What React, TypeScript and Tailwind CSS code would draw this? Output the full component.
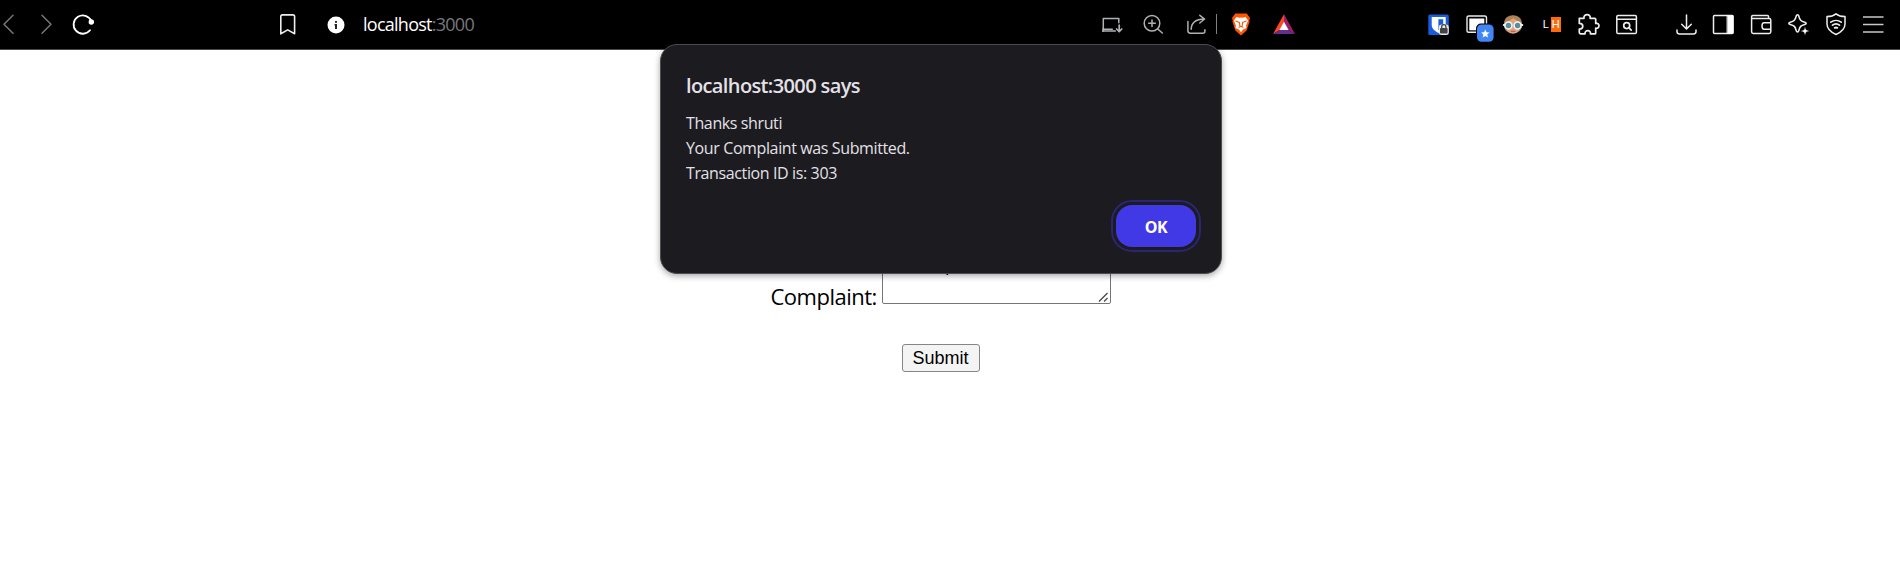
import type { ReactNode } from "react";

type IconProps = { children: ReactNode; className?: string };

function Icon({ children, className = "" }: IconProps) {
  return (
    <svg
      width={24}
      height={24}
      viewBox="0 0 24 24"
      fill="none"
      stroke="currentColor"
      strokeWidth="1.5"
      strokeLinecap="round"
      strokeLinejoin="round"
      className={`block shrink-0 overflow-visible ${className}`}
    >
      {children}
    </svg>
  );
}

function Navigation() {
  return (
    <nav className="flex w-[275px] shrink-0 items-center">
      <Icon className="-ml-[3px] text-[#77777b]">
        <path d="M16 3.3 7 12.3l9 9" />
      </Icon>
      <Icon className="ml-[13px] text-[#77777b]">
        <path d="m8 3.3 9 9-9 9" />
      </Icon>
      <Icon className="ml-[13px] text-white">
        <path d="M20.3 9A9.2 9.2 0 1 0 19 18.3" strokeWidth="1.8" />
        <circle cx="20.3" cy="10" r="2.7" fill="currentColor" stroke="none" />
      </Icon>
    </nav>
  );
}

function AddressBar() {
  return (
    <div className="flex w-[1151px] shrink-0 items-center">
      <Icon>
        <path d="M5.8 21.8V4.6q0-1.7 1.7-1.7h10.4q1.7 0 1.7 1.7v17.2l-6.9-3.9z" strokeWidth="1.6" />
      </Icon>
      <Icon className="ml-[25px] text-white">
        <circle cx="12" cy="13" r="8.5" fill="currentColor" stroke="none" />
        <path d="M11 9h2v1.8h-2zM10.5 12H13v5h-2v-3.5h-.5z" fill="#222" stroke="none" />
      </Icon>
      <p className="ml-[15px] w-[726px] font-['Open_Sans','Noto_Sans',sans-serif] text-[18px] leading-6 tracking-[-0.74px] text-white">
        localhost<span className="text-[#77777b]">:3000</span>
      </p>
      <div className="flex items-center text-[#b0b1b3]">
        <Icon className="ml-[11px]">
          <path d="M18.8 10.8V6.6H3.3v10.6h9" />
          <path d="M2.8 19h12.4M3 17.2v2M19.2 13v6.2M16.6 17l2.6 2.6L21.8 17" strokeWidth="1.7" />
        </Icon>
        <Icon className="ml-[18px]">
          <circle cx="10" cy="11.3" r="7.8" />
          <path d="m15.8 17 4.5 4M10 8v6.6M6.7 11.3h6.6" />
        </Icon>
        <Icon className="ml-[19px]">
          <path d="M2.9 9.5v9.3q0 2.4 2.4 2.4h12.4q2.2 0 2.2-2v-1.4M6.2 17.3c0-6.7 5-10.4 12.8-10.4M14.8 3.3l4.8 3.7-4.8 4" />
        </Icon>
      </div>
      <div className="ml-[7px] h-5 w-px bg-[#808084]" />
      <Icon className="ml-[12px]">
        <path d="M6.3 1.500h11.4l3.3 4.6-.7 2.4.3 1-3 9L12 23.400 6.4 18.500l-3-9 .3-1L3 6.100z" fill="#ff5500" stroke="none" />
        <path d="m7.5 5 2.7.8 1.8-.4 1.8.4 2.7-.8 2.6 3.4-2 5.2.3 2.4-3.3 1.4L12 20.2l-2.1-2.8L6.6 16l.3-2.4-2-5.2z" fill="#fff" stroke="none" />
        <path d="m6.8 9 3.6 1.4M17.2 9l-3.6 1.4M10.4 10.4l.4 3.2M13.6 10.4l-.4 3.2M10 15.3l2-1 2 1" stroke="#ff5500" strokeWidth="1.1" />
      </Icon>
      <Icon className="ml-[19px]">
        <path d="M12 2.3 1 22l7-4.2 4-7z" fill="#ff4724" stroke="none" />
        <path d="m12 2.3 11 19.7-7-4.2-4-7z" fill="#9e1f63" stroke="none" />
        <path d="m1 22 7-4.2h8l7 4.2z" fill="#662d91" stroke="none" />
        <path d="m12 9.8 4.6 8.2H7.4z" fill="#fff" stroke="none" />
      </Icon>
    </div>
  );
}

function Extensions() {
  return (
    <div className="flex shrink-0 items-center gap-[13.6px]">
      <Icon>
        <rect x="2.3" y="2.5" width="20.5" height="20.5" rx="1.6" fill="#175ddc" stroke="none" />
        <path d="M5.7 5h14v8c0 4-4 6.5-7 8-3-1.5-7-4-7-8z" fill="#fff" stroke="none" />
        <path d="M12.4 7.2h4.8v6c0 2-2.3 3.6-4.8 5z" fill="#175ddc" stroke="none" />
        <rect x="12.8" y="12.5" width="10" height="10.5" rx="3" fill="#e8e8e8" stroke="none" />
        <rect x="14" y="16" width="7.6" height="5.6" rx="1" fill="#444" stroke="none" />
        <path d="M15.7 16v-1.2a2.1 2.1 0 0 1 4.2 0V16" stroke="#444" strokeWidth="1.3" />
      </Icon>
      <Icon>
        <rect x="3" y="4" width="19.5" height="16.3" rx="1.8" stroke="#ececec" strokeWidth="1.4" />
        <rect x="5.3" y="6.5" width="15" height="11.8" fill="#fff" stroke="none" />
        <rect x="12" y="11.5" width="18.5" height="19" rx="5" fill="#000" stroke="none" />
        <rect x="13" y="12.5" width="16.6" height="17.2" rx="4.5" fill="#4285f4" stroke="none" />
        <path d="m21.3 17.4 1.2 2.9 3.1.2-2.4 2 .8 3-2.7-1.6-2.7 1.6.8-3-2.4-2 3.1-.2z" fill="#fff" stroke="none" />
      </Icon>
      <Icon>
        <circle cx="12" cy="12.7" r="9" fill="#e1a27e" stroke="none" />
        <path d="M3.300 12C2.900 6 7.300 3.300 12 3.300S21.100 6 20.700 12L19 10.500 12.300 6.200l-7 4.300z" fill="#ad8256" stroke="none" />
        <path d="M3.200 13.500c0 2.600 1.100 4.800 2.600 6V15zM20.800 13.500c0 2.600-1.100 4.800-2.600 6V15z" fill="#99704d" stroke="none" />
        <circle cx="7.400" cy="13.400" r="3.500" fill="#5c8b9b" stroke="#e9f7fa" strokeWidth="1.500" />
        <circle cx="16.600" cy="13.400" r="3.500" fill="#5c8b9b" stroke="#e9f7fa" strokeWidth="1.500" />
        <path d="M2.800 13h1M20.300 13h1" stroke="#e9f7fa" strokeWidth="2" />
        <path d="M10.100 19.300h3.800" stroke="#b35442" strokeWidth="1" />
      </Icon>
      <div className="flex h-6 w-6 items-center justify-end pr-[2px] pt-px font-['Liberation_Sans',sans-serif] text-[11px] leading-[15px] text-white">
        <span className="mr-[2px] text-[11px]">L</span>
        <span className="h-[15px] w-[10px] bg-[#ff6b0a] text-center">H</span>
      </div>
      <Icon>
        <path d="M3 5.6h4.7C7.3 3.4 8.8 2 10.8 2s3.5 1.4 3.1 3.6h4.5q1 0 1 1v4.2c2-.5 3.3.5 3.3 2.3s-1.3 2.8-3.3 2.3v4.8q0 1-1 1h-4.2c.2-2.2-1-3.2-2.7-3.2s-3 1-2.8 3.2H4.3q-1.3 0-1.3-1.3v-3.6c2.3 0 3.5-1.2 3.5-2.8S5.3 10.800 3 10.700z" transform="translate(.3 .7)" strokeWidth="1.7" />
      </Icon>
      <Icon>
        <rect x="2.800" y="3.500" width="19.600" height="18" rx="1.300" />
        <path d="M3 7.200h19.200" />
        <circle cx="12.700" cy="13.600" r="3" strokeWidth="1.700" />
        <path d="m15 15.900 2.200 2.200" strokeWidth="1.700" />
      </Icon>
    </div>
  );
}

function BrowserControls() {
  return (
    <div className="ml-[36px] flex shrink-0 items-center gap-[13.4px]">
      <Icon>
        <path d="M12.5 3v13.8M7.7 12.2l4.8 4.8 4.8-4.8M3 18v1.5q0 2.4 2.4 2.4h14.2q2.4 0 2.4-2.4V18" />
      </Icon>
      <Icon>
        <rect x="2.5" y="3.5" width="19.5" height="18" rx="1" />
        <path d="M16.5 3.5H22v18h-5.500z" fill="#fff" stroke="#fff" strokeWidth="1" />
      </Icon>
      <Icon>
        <path d="M19.600 6V4.800q0-1.300-1.300-1.300H3.800q-1.200 0-1.200 1.300v15q0 1.600 1.600 1.600h16q1.600 0 1.600-1.600V8.200q0-1.700-1.700-1.700H3M21.800 10.800H15q-2 0-2 3.200t2 3.200h6.800" />
      </Icon>
      <Icon>
        <path d="M11.500 2.800c.8 0 1 .3 1.300 1.300 1 4 2 5 6 6.100 1.800.5 1.800 1.700 0 2.200-4 1.100-5 2.200-6 6.200-.5 1.800-2.100 1.800-2.600 0-1-4-2-5.100-6-6.200-1.800-.5-1.800-1.700 0-2.200 4-1.100 5-2.100 6-6.100.3-1 .5-1.300 1.300-1.300z" strokeWidth="1.6" />
        <path d="m19 14.500 1.200 3.300 3.300 1.200-3.300 1.200L19 23.500l-1.200-3.300-3.300-1.200 3.300-1.200z" fill="#fff" stroke="#000" strokeWidth=".5" />
      </Icon>
      <Icon>
        <path d="M12 1.800c2.700 2.200 5.600 2.700 9 2.700V12c0 4.700-3.600 8-9 10.500-5.400-2.500-9-5.800-9-10.500V4.500c3.400 0 6.300-.5 9-2.700z" />
        <path d="M6.800 10.200c3-2.300 7.400-2.300 10.400 0M8.500 13.200c2-1.600 5-1.600 7 0" strokeWidth="1.7" />
        <path d="M10.800 15.800q1.200-.8 2.400 0" strokeWidth="2" />
      </Icon>
      <Icon className="text-[#c8c8ca]">
        <path d="M2 5h20.500M2 12.500h20.500M2 20h20.500" strokeWidth="1.7" strokeLinecap="butt" />
      </Icon>
    </div>
  );
}

function Toolbar() {
  return (
    <header className="flex h-[50px] items-center overflow-hidden border-b border-[#4a494d] bg-black pb-px text-[#eeeef0]">
      <Navigation />
      <AddressBar />
      <Extensions />
      <BrowserControls />
    </header>
  );
}

function ComplaintForm() {
  return (
    <form
      className="flex flex-col items-center pr-[19px] pt-[208px] text-black"
      onSubmit={(event) => event.preventDefault()}
    >
      <label className="relative flex items-end">
        <span className="mr-[6px] -mb-[9px] w-[105px] whitespace-nowrap font-['Open_Sans','Noto_Sans',sans-serif] text-[22px] leading-[34px] tracking-[-0.5px]">
          Complaint:
        </span>
        <textarea
          defaultValue="no computers"
          className="block h-[46px] w-[229px] resize-none overflow-hidden rounded-[2px] border border-[#767676] bg-white px-[2.5px] py-0 font-['Liberation_Mono',monospace] text-[16.67px] leading-[18px]"
        />
        <svg
          width={12}
          height={12}
          viewBox="0 0 12 12"
          className="absolute bottom-px right-px stroke-[#4d4d4d]"
          strokeWidth="1.4"
        >
          <path d="m1 10.500 8.500-8.500M6 10.500 9.500 7" />
        </svg>
      </label>
      <button
        type="submit"
        className="mt-10 h-7 w-[78px] rounded-[3px] border border-[#858585] bg-[#f4f4f4] font-['Liberation_Sans',sans-serif] text-[18px] leading-[25px]"
      >
        Submit
      </button>
    </form>
  );
}

function AlertDialog() {
  return (
    <section
      role="alertdialog"
      aria-labelledby="alert-title"
      className="absolute left-[660px] top-[44px] flex h-[230px] w-[562px] flex-col rounded-[17px] border-[1.5px] border-[#4c4b51] bg-[#1c1b1f] pl-[25px] pr-[25px] pt-[27px] font-['Open_Sans','Noto_Sans',sans-serif] text-[#e4e1e8] shadow-[0_2px_6px_rgba(0,0,0,0.35)]"
    >
      <h1 id="alert-title" className="text-[20px] font-semibold leading-7 tracking-[-0.62px]">
        localhost:3000 says
      </h1>
      <div className="mt-[11px] text-[16px] leading-[25px] tracking-[-0.38px]">
        <p>Thanks shruti</p>
        <p>Your Complaint was Submitted.</p>
        <p>Transaction ID is: 303</p>
      </div>
      <button
        type="button"
        className="mt-[19px] h-[42px] w-[80px] self-end rounded-[16px] bg-[#4139e6] pt-px text-[16px] font-bold tracking-[-0.5px] text-white outline-[2px] outline-offset-[3px] outline-[#2a2672]"
      >
        OK
      </button>
    </section>
  );
}

export default function App() {
  return (
    <div className="relative h-[585px] w-[1900px] overflow-hidden bg-white">
      <Toolbar />
      <main>
        <ComplaintForm />
      </main>
      <AlertDialog />
    </div>
  );
}
